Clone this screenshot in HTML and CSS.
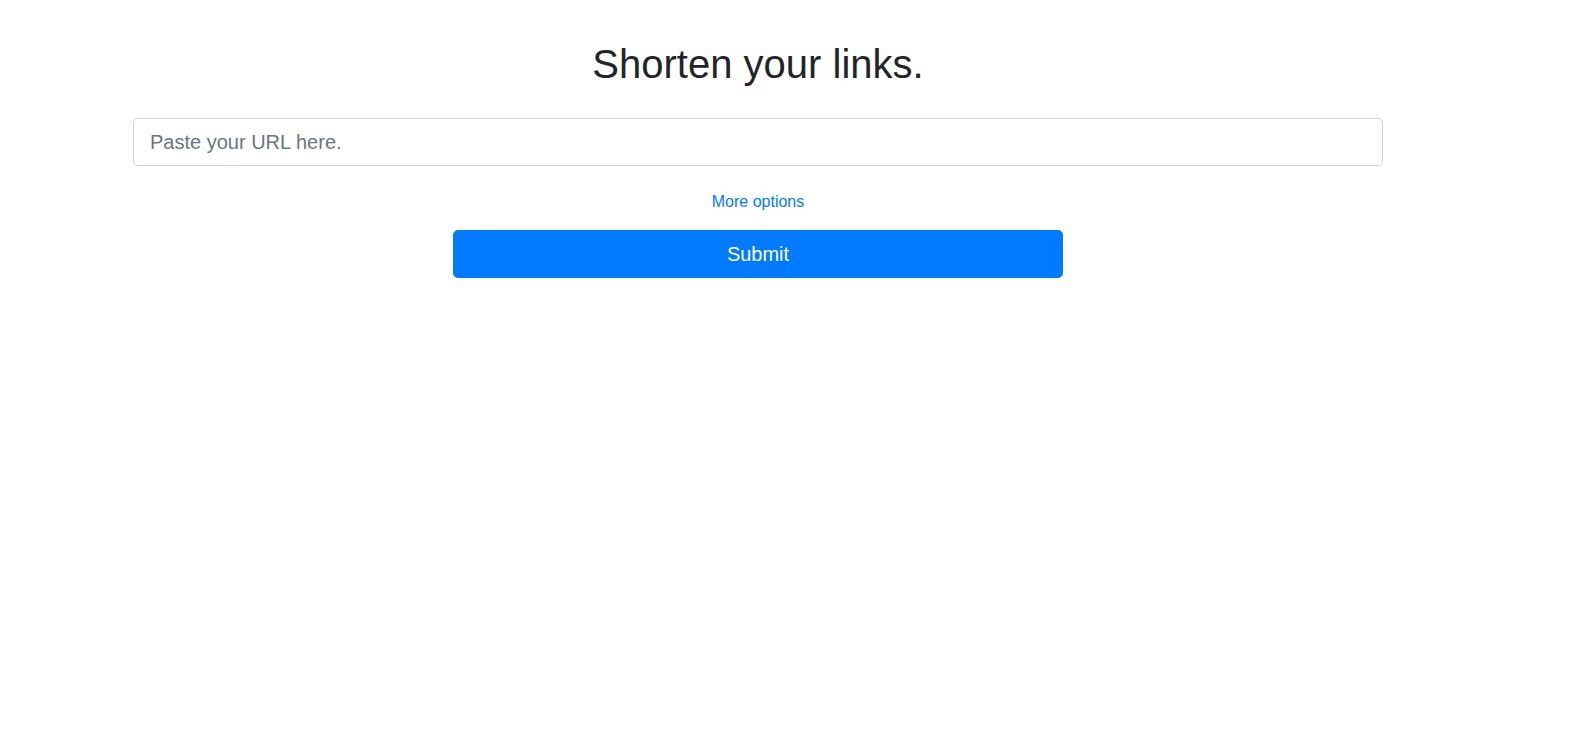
FILE: index.html
```html
<!DOCTYPE html>
<html lang="en">
<head>
<meta charset="utf-8">
<title>Shorten your links.</title>
<link rel="stylesheet" href="styles.css">
</head>
<body>
<main class="page">
  <h1 class="title">Shorten your links.</h1>
  <form class="shorten-form">
    <input class="url-input" type="text" placeholder="Paste your URL here.">
    <a class="more-link" href="#">More options</a>
    <button class="submit-btn" type="button">Submit</button>
  </form>
</main>
</body>
</html>
```

FILE: styles.css
```css
html, body {
  margin: 0;
  padding: 0;
  background: #fff;
}
body {
  font-family: "Liberation Sans", Arial, sans-serif;
  color: #212529;
  font-size: 16px;
  line-height: 1.5;
}
.page {
  width: 1250px;
  margin-left: 133px;
  padding-top: 40px;
}
.title {
  margin: 0 0 30px;
  font-size: 40px;
  font-weight: 400;
  line-height: 1.2;
  text-align: center;
  color: #212529;
}
.shorten-form {
  display: flex;
  flex-direction: column;
  align-items: center;
}
.url-input {
  box-sizing: border-box;
  width: 100%;
  height: 48px;
  padding: 8px 16px;
  font-family: inherit;
  font-size: 20px;
  line-height: 1.5;
  color: #495057;
  background: #fff;
  border: 1px solid #ced4da;
  border-radius: 4.8px;
  outline: none;
}
.url-input::placeholder {
  color: #6c757d;
  opacity: 1;
}
.more-link {
  margin-top: 24px;
  font-size: 16px;
  line-height: 24px;
  color: #007bff;
  text-decoration: none;
}
.submit-btn {
  box-sizing: border-box;
  margin-top: 16px;
  width: 610px;
  height: 48px;
  padding: 8px 16px;
  font-family: inherit;
  font-size: 20px;
  line-height: 1.5;
  color: #fff;
  background: #007bff;
  border: 1px solid #007bff;
  border-radius: 4.8px;
  cursor: pointer;
}
```
